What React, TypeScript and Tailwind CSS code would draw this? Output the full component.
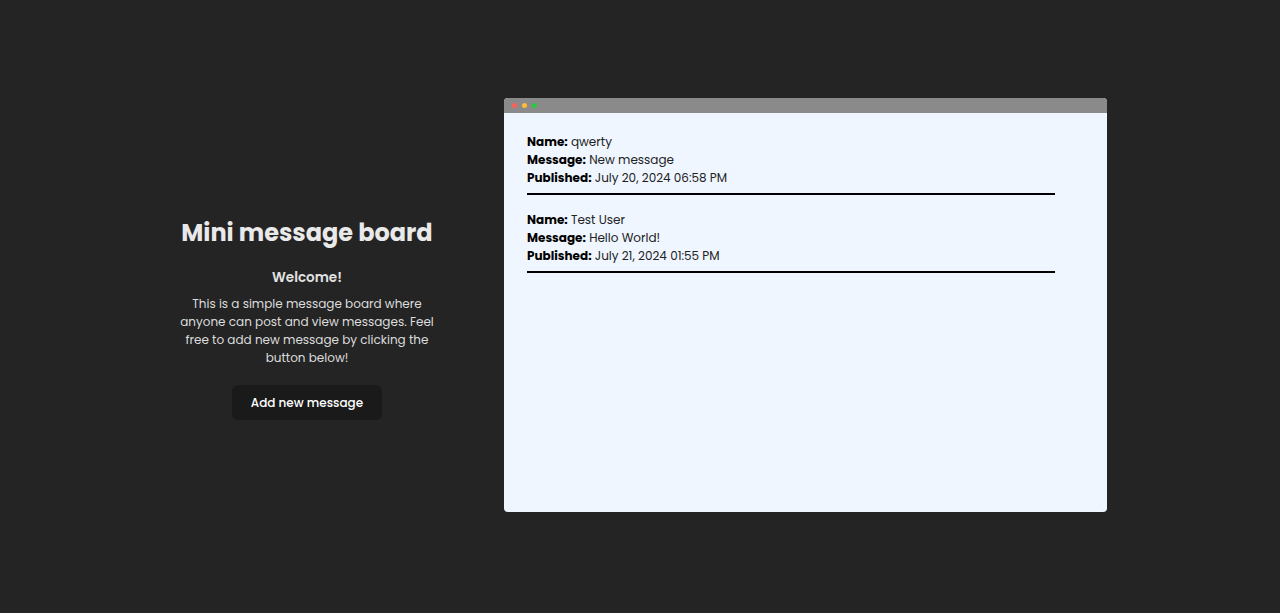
import React from "react";

const font = { fontFamily: "Poppins, Inter, 'Noto Sans', sans-serif" };

const messages = [
  { name: "qwerty", message: "New message", published: "July 20, 2024 06:58 PM" },
  { name: "Test User", message: "Hello World!", published: "July 21, 2024 01:55 PM" },
];

export default function App() {
  return (
    <div className="w-full h-[613px] bg-[#242424] flex items-start justify-center" style={font}>
      <div className="flex flex-row gap-[66px] pt-[98px] pl-[3px]">
        <div className="w-[262px] flex flex-col items-center text-center pt-[120px]">
          <h1 className="text-[24px] leading-[30px] font-bold text-[#e9e9e9]">Mini message board</h1>
          <h2 className="mt-[21px] text-[13.5px] leading-[18px] font-semibold text-[#e2e2e2]">Welcome!</h2>
          <p className="mt-[8px] text-[12px] leading-[18px] text-[#dcdcdc]">
            This is a simple message board where anyone can post and view messages. Feel free to add new message by clicking the button below!
          </p>
          <button className="mt-[18px] w-[150px] h-[35px] rounded-[6px] bg-[#1a1a1a] text-[12px] font-medium text-white">
            Add new message
          </button>
        </div>
        <div className="w-[603px] h-[414px] rounded-[4px] overflow-hidden bg-[#eff6ff] flex flex-col">
          <div className="h-[15px] bg-[#8a8a8a] flex items-center gap-[5px] pl-[8px]">
            <span className="w-[5px] h-[5px] rounded-full bg-[#ff5f57]" />
            <span className="w-[5px] h-[5px] rounded-full bg-[#febc2e]" />
            <span className="w-[5px] h-[5px] rounded-full bg-[#28c840]" />
          </div>
          <div className="pl-[23px] pt-[20px] w-[551px]">
            {messages.map((m, i) => (
              <div key={i} className="border-b-2 border-black pb-[6px] mb-[16px] text-[12px] leading-[18px] text-[#222]">
                <div><span className="font-bold text-black">Name:</span> {m.name}</div>
                <div><span className="font-bold text-black">Message:</span> {m.message}</div>
                <div><span className="font-bold text-black">Published:</span> {m.published}</div>
              </div>
            ))}
          </div>
        </div>
      </div>
    </div>
  );
}
